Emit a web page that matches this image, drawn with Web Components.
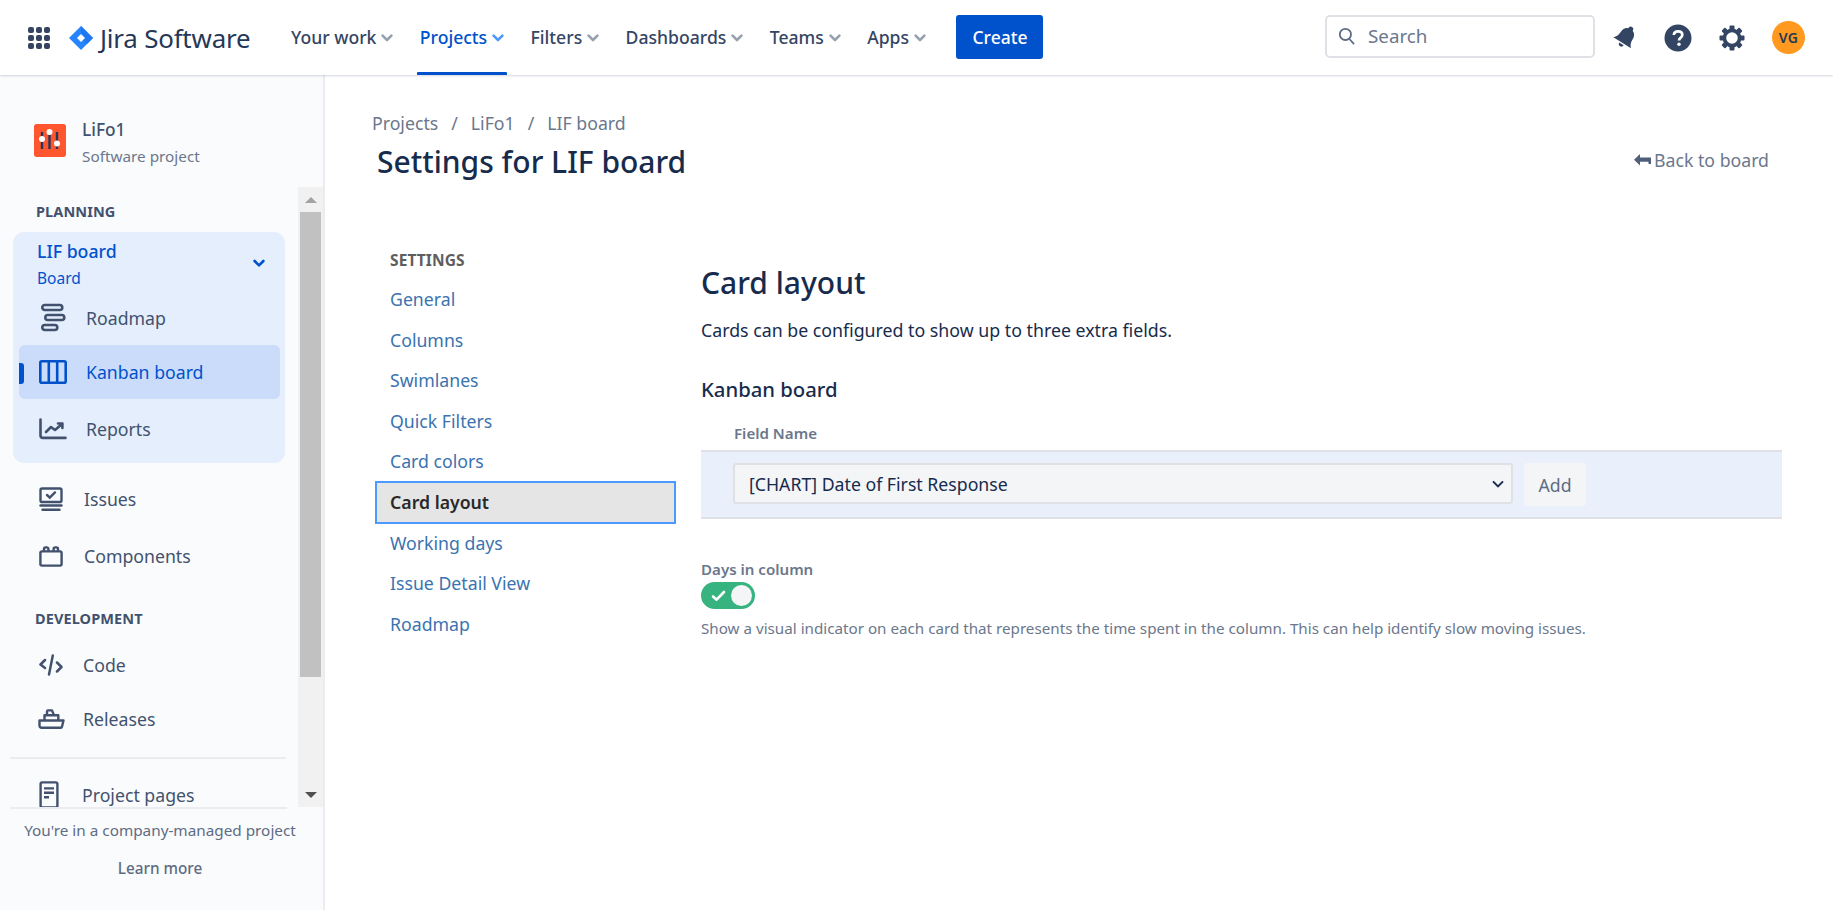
<!DOCTYPE html>
<html lang="en">
<head>
<meta charset="utf-8">
<title>Card layout</title>
<style>
  html, body { margin: 0; height: 100%; overflow: hidden; background: #fff; }
  body { font-family: "Noto Sans", "Open Sans", sans-serif; color: #172b4d; display: flex; flex-direction: column; height: 910px; }
</style>
</head>
<body>
<jira-topbar></jira-topbar>
<app-shell>
  <jira-sidebar slot="side"></jira-sidebar>
  <board-settings slot="main"></board-settings>
</app-shell>

<script>
const ICONS = {
  roadmap: '<svg width="26" height="30" viewBox="0 0 26 30" fill="none" stroke="currentColor" stroke-width="2.6"><rect x="2.3" y="2" width="20" height="5" rx="2.5"/><rect x="5.3" y="12" width="19" height="5" rx="2.5"/><rect x="2.3" y="22" width="15" height="5" rx="2.5"/></svg>',
  kanban: '<svg width="28" height="24" viewBox="0 0 28 24" fill="none" stroke="currentColor" stroke-width="2.6"><rect x="1.3" y="1.3" width="25.4" height="21.4" rx="1.5"/><path d="M9.8 1.3v21.4M18.2 1.3v21.4"/></svg>',
  reports: '<svg width="28" height="22" viewBox="0 0 28 22" fill="none" stroke="currentColor" stroke-width="2.6" stroke-linejoin="round" stroke-linecap="round"><path d="M1.5 1.5v16a2.4 2.4 0 0 0 2.4 2.4h22.6"/><path d="M7 14l5-5 4 3 7-6"/><path d="M19 5.5h4.4v4.4"/></svg>',
  issues: '<svg width="24" height="25" viewBox="0 0 24 25" fill="none" stroke="currentColor" stroke-width="2.4" stroke-linecap="round"><rect x="1.5" y="1.5" width="21" height="13.5" rx="1.6"/><path d="M8 8l2.8 2.6L16 5.4"/><path d="M1.5 18.5h21"/><path d="M3.5 22.8h17"/></svg>',
  components: '<svg width="24" height="21" viewBox="0 0 24 21" fill="none" stroke="currentColor" stroke-width="2.4" stroke-linejoin="round"><rect x="1.4" y="5.4" width="21.2" height="14.2" rx="1.6"/><path d="M5 5.4V3a1.6 1.6 0 0 1 1.6-1.6h1.2A1.6 1.6 0 0 1 9.4 3v2.4M14.6 5.4V3a1.6 1.6 0 0 1 1.6-1.6h1.2A1.6 1.6 0 0 1 19 3v2.4"/></svg>',
  code: '<svg width="24" height="22" viewBox="0 0 24 22" fill="none" stroke="currentColor" stroke-width="2.5" stroke-linecap="round" stroke-linejoin="round"><path d="M6 6l-4.5 4.5L6 14"/><path d="M18 8.5l4.5 4.5L18 17.5"/><path d="M13.8 1.6L10 20.4"/></svg>',
  releases: '<svg width="27" height="20" viewBox="0 0 27 20" fill="none" stroke="currentColor" stroke-width="2.4" stroke-linejoin="round"><path d="M1.5 11.5h24l-1.6 6.5a1 1 0 0 1-1 .7H3.5a2 2 0 0 1-2-2z"/><path d="M6.5 11.5V6.2h13.8v5.3"/><path d="M9 6.2V2.4a1 1 0 0 1 1-1h4l2 4.8"/></svg>',
  pages: '<svg width="20" height="28" viewBox="0 0 20 28" fill="none" stroke="currentColor" stroke-width="2.4"><rect x="1.6" y="1.4" width="16.8" height="25" rx="1.6"/><path d="M5 7.4h10M5 11.8h10M5 16.2h5"/></svg>'
};

class AppShell extends HTMLElement {
  constructor() {
    super();
    this.attachShadow({ mode: 'open' });
    this.shadowRoot.innerHTML = `
      <style>
        :host { display: flex; flex: 1; min-height: 0; }
        ::slotted([slot=side]) { flex: 0 0 325px; }
        ::slotted([slot=main]) { flex: 1; min-width: 0; }
      </style>
      <slot name="side"></slot>
      <slot name="main"></slot>
    `;
  }
}

class JiraTopbar extends HTMLElement {
  constructor() {
    super();
    this.attachShadow({ mode: 'open' });
    const items = [['Your work', 0], ['Projects', 1], ['Filters', 0], ['Dashboards', 0], ['Teams', 0], ['Apps', 0]];
    const chevron = '<svg width="12" height="8" viewBox="0 0 12 8" fill="none" stroke="currentColor" stroke-width="2.6" stroke-linecap="round" stroke-linejoin="round"><path d="M1.6 1.6L6 6l4.4-4.4"/></svg>';
    const dots = Array.from({ length: 9 }, () => '<i></i>').join('');
    const teeth = [0, 45, 90, 135, 180, 225, 270, 315].map(a => `<rect x="10.500" y="0.500" width="5" height="5" rx="1" transform="rotate(${a} 13 13)"/>`).join('');
    this.shadowRoot.innerHTML = `
      <style>
        :host {
          display: flex; align-items: center; height: 75px; flex: none; box-sizing: border-box;
          padding: 0 0 0 28px; background: #fff; position: relative; z-index: 2;
          box-shadow: 0 1px 2px rgba(9, 30, 66, .18);
        }
        .dots { display: grid; grid-template-columns: repeat(3, 6px); gap: 2px; width: 22px; height: 22px; margin-top: 1px; }
        .dots i { width: 6px; height: 6px; border-radius: 2px; background: #344563; }
        .logo { display: flex; align-items: center; margin-left: 19px; gap: 7px; width: 193px; font-size: 25.900px; color: #253858; letter-spacing: -.2px; }
        nav { display: flex; height: 100%; margin-left: 29px; }
        a { position: relative; display: flex; align-items: center; gap: 5px; margin-right: 26.400px; padding-bottom: 2px; font-size: 17.600px; font-weight: 500; color: #344563; height: 100%; box-sizing: border-box; }
        a svg { color: #97a0af; margin-top: 2px; }
        a.on { color: #0052cc; }
        a.on svg { color: #4c9aff; }
        a.on::after { content: ''; position: absolute; left: -3px; right: -3px; bottom: 0; height: 3px; background: #0052cc; border-radius: 1px 1px 0 0; }
        .create { display: flex; align-items: center; justify-content: center; margin: -1px 0 0 4px; width: 87px; height: 44px; background: #0052cc; color: #fff; font-size: 17.500px; font-weight: 500; border-radius: 3px; }
        .search { display: flex; align-items: center; gap: 13px; margin-left: auto; width: 270px; height: 43px; box-sizing: border-box; border: 2px solid #dfe1e6; border-radius: 5px; padding: 0 0 2px 11px; color: #6b778c; font-size: 18.800px; margin-top: -2px; }
        .act { display: flex; align-items: center; margin: 0 28px 0 17px; }
        .bell { margin-right: 25px; }
        .help { margin-right: 27px; }
        .gear { margin-right: 27px; }
        .avatar { display: flex; align-items: center; justify-content: center; width: 33px; height: 33px; border-radius: 50%; background: #ff991f; color: #253858; font-size: 14px; font-weight: 600; letter-spacing: .3px; }
      </style>
      <div class="dots">${dots}</div>
      <div class="logo">
        <svg width="24" height="24" viewBox="0 0 24 24"><path d="M12 0l12 12-12 12L0 12z" fill="#2684ff"/><path d="M12 0l12 12-6 6-6-6 0-6z" fill="#1f78f0"/><path d="M12 8l4 4-4 4-4-4z" fill="#fff"/></svg>
        <span>Jira Software</span>
      </div>
      <nav>${items.map(([t, on]) => `<a class="${on ? 'on' : ''}">${t}${chevron}</a>`).join('')}</nav>
      <div class="create">Create</div>
      <div class="search">
        <svg width="17" height="18" viewBox="0 0 17 18" fill="none" stroke="#5e6c84" stroke-width="1.800"><circle cx="7.400" cy="7.400" r="5.600"/><path d="M11.400 12l4.200 4.600" stroke-linecap="round"/></svg>
        <span>Search</span>
      </div>
      <div class="act">
        <svg class="bell" width="27" height="27" viewBox="0 0 26 26" fill="#344563"><g transform="rotate(32 13 13)"><circle cx="13" cy="3.500" r="2.400"/><path d="M13 3.500c-4.400 0-6.700 3-6.700 7.200 0 3.500-.9 6.200-3.300 8.300h20c-2.400-2.100-3.300-4.800-3.300-8.300 0-4.200-2.300-7.200-6.700-7.200z"/><path d="M10.400 20.300h5.200c-.2 1.700-1.200 2.700-2.600 2.700s-2.400-1-2.600-2.700z"/></g></svg>
        <svg class="help" width="28" height="28" viewBox="0 0 28 28"><circle cx="14" cy="14" r="13.500" fill="#344563"/><path d="M9.800 11c.2-2.400 1.900-3.700 4.300-3.700 2.500 0 4.200 1.400 4.200 3.500 0 3-3.300 3-3.300 5.700" fill="none" stroke="#fff" stroke-width="2.700"/><circle cx="15" cy="20.300" r="1.700" fill="#fff"/></svg>
        <svg class="gear" width="26" height="26" viewBox="0 0 26 26" fill="#344563"><circle cx="13" cy="13" r="7.600" fill="none" stroke="#344563" stroke-width="3.600"/>${teeth}</svg>
        <div class="avatar">VG</div>
      </div>
    `;
  }
}

class NavItem extends HTMLElement {
  constructor() {
    super();
    this.attachShadow({ mode: 'open' });
  }
  connectedCallback() {
    const icon = ICONS[this.getAttribute('icon')] || '';
    this.shadowRoot.innerHTML = `
      <style>
        :host { display: flex; align-items: center; height: var(--row, 54px); box-sizing: border-box; padding-left: var(--pad, 25px); color: #42526e; font-size: 17.700px; position: relative; border-radius: 6px; }
        :host([active]) { background: #cadcf9; color: #0052cc; }
        :host([active])::before { content: ''; position: absolute; left: 0; top: 18px; width: 5px; height: 21px; background: #0052cc; border-radius: 0 3px 3px 0; }
        .i { display: flex; align-items: center; justify-content: center; width: 30px; margin-right: var(--gap, 15px); }
      </style>
      <span class="i">${icon}</span><slot></slot>
    `;
  }
}

class JiraSidebar extends HTMLElement {
  constructor() {
    super();
    this.attachShadow({ mode: 'open' });
    this.shadowRoot.innerHTML = `
      <style>
        :host { display: flex; flex-direction: column; box-sizing: border-box; background: #fafbfc; border-right: 2px solid #ebecf0; height: 100%; }
        .project { display: flex; align-items: center; gap: 16px; height: 112px; flex: none; box-sizing: border-box; padding: 18px 0 0 34px; }
        .project b { display: block; font-weight: 500; font-size: 17.300px; color: #42526e; }
        .project small { display: block; font-size: 15.300px; color: #6b778c; margin-top: 5px; }
        .project .txt { padding-top: 4px; }
        .mark { width: 32px; height: 33px; border-radius: 2px; display: block; }
        .scroll { display: flex; height: 620px; flex: none; }
        .list { flex: 1; min-width: 0; overflow: hidden; }
        h4 { margin: 0; font-size: 14.500px; font-weight: 700; color: #42526e; letter-spacing: .1px; }
        .plan { padding: 14px 0 11px 36px; line-height: 20px; }
        .dev { padding: 0 0 0 35px; line-height: 20px; margin-top: 24px; }
        .group { margin: 0 0 0 13px; width: 272px; height: 231px; box-sizing: border-box; background: #e4eefc; border-radius: 11px; padding-top: 7px; }
        .head { display: flex; align-items: center; justify-content: space-between; padding: 0 20px 0 24px; color: #0052cc; }
        .head b { display: block; font-weight: 500; font-size: 17.700px; line-height: 24px; }
        .head small { display: block; font-size: 15.500px; line-height: 20px; margin-top: 5px; }
        .rows { padding: 0 5px 0 6px; margin-top: 3px; }
        .divider { height: 2px; background: #ebecf0; margin: 13px 12px 0 10px; }
        .bar { width: 25px; flex: none; background: #f1f1f1; display: flex; flex-direction: column; align-items: center; }
        .thumb { width: 21px; height: 465px; background: #c1c1c1; }
        .up, .down { flex: none; display: flex; justify-content: center; }
        .up { height: 25px; align-items: center; }
        .up::before { content: ''; border: 6px solid transparent; border-top: 0; border-bottom: 6px solid #a3a3a3; }
        .down { margin-top: auto; height: 36px; }
        .down::before { content: ''; border: 6px solid transparent; border-bottom: 0; border-top: 6px solid #505050; margin-top: 21px; }
        .foot { flex: none; margin: 0 13px 0 10px; text-align: center; font-size: 15.300px; color: #5e6c84; }
        .foot hr { margin: 0 0 10px; border: 0; height: 2px; width: 277px; background: #ebecf0; }
        .foot div { line-height: 22px; }
        .foot .more { margin-top: 16px; font-weight: 500; }
        .clip { height: 50px; overflow: hidden; }
      </style>
      <div class="project">
        <svg class="mark" viewBox="0 0 32 33">
          <rect width="32" height="33" rx="2" fill="#ff5630"/>
          <path d="M8 8v17M15.500 6v19M23 8v17" stroke="#253858" stroke-width="2.400"/>
          <circle cx="8" cy="15" r="3" fill="#fff"/><circle cx="15.500" cy="8" r="3" fill="#fff"/><circle cx="23" cy="19.500" r="3" fill="#fff"/>
        </svg>
        <div class="txt"><b>LiFo1</b><small>Software project</small></div>
      </div>
      <div class="scroll">
        <div class="list">
          <h4 class="plan">PLANNING</h4>
          <div class="group">
            <div class="head">
              <div><b>LIF board</b><small>Board</small></div>
              <svg width="12" height="9" viewBox="0 0 12 9" fill="none" stroke="#0052cc" stroke-width="2.600" stroke-linecap="round" stroke-linejoin="round"><path d="M1.600 2L6 6.400 10.400 2"/></svg>
            </div>
            <div class="rows">
              <nav-item icon="roadmap" style="--row:54px;--pad:19px;--gap:18px">Roadmap</nav-item>
              <nav-item icon="kanban" active style="--pad:19px;--gap:18px">Kanban board</nav-item>
              <nav-item icon="reports" style="--pad:19px;--gap:18px;--row:58px;margin-top:1px">Reports</nav-item>
            </div>
          </div>
          <nav-item icon="issues" style="margin-top:7px;--row:58px;--pad:36px;--gap:18px">Issues</nav-item>
          <nav-item icon="components" style="--row:56px;--pad:36px;--gap:18px">Components</nav-item>
          <h4 class="dev">DEVELOPMENT</h4>
          <nav-item icon="code" style="margin-top:7px;--row:59px;--pad:36px;--gap:17px">Code</nav-item>
          <nav-item icon="releases" style="--row:50px;--pad:36px;--gap:17px">Releases</nav-item>
          <div class="divider"></div>
          <div class="clip"><nav-item icon="pages" style="--row:72px;--gap:18px;--pad:34px">Project pages</nav-item></div>
        </div>
        <div class="bar"><div class="up"></div><div class="thumb"></div><div class="down"></div></div>
      </div>
      <div class="foot">
        <hr>
        <div>You're in a company-managed project</div>
        <div class="more">Learn more</div>
      </div>
    `;
  }
}

class BoardSettings extends HTMLElement {
  constructor() {
    super();
    this.attachShadow({ mode: 'open' });
    const links = ['General', 'Columns', 'Swimlanes', 'Quick Filters', 'Card colors', 'Card layout', 'Working days', 'Issue Detail View', 'Roadmap'];
    this.shadowRoot.innerHTML = `
      <style>
        :host { display: block; box-sizing: border-box; padding: 34px 51px 0 47px; background: #fff; height: 100%; }
        .crumbs { display: flex; gap: 13px; font-size: 17.700px; color: #6b778c; line-height: 28px; }
        .title { display: flex; align-items: center; justify-content: space-between; padding: 5px 13px 0 5px; }
        h1 { margin: 0; font-size: 30px; line-height: 40px; font-weight: 500; color: #172b4d; }
        .back { display: flex; align-items: center; gap: 3px; font-size: 17.700px; color: #6b778c; margin-top: -5px; }
        .cols { display: flex; margin-top: 60px; }
        ul { list-style: none; margin: 0; padding: 0; width: 301px; flex: none; margin-left: 3px; }
        li.h { font-size: 15.500px; font-weight: 700; color: #5e5e5e; padding-left: 15px; height: 37px; line-height: 37px; letter-spacing: .1px; }
        li { display: flex; align-items: center; height: 40.500px; box-sizing: border-box; padding-left: 15px; font-size: 17.700px; color: #3b73af; }
        li.on { background: #e5e5e5; border: 2px solid #4c9aff; padding-left: 13px; font-weight: 600; color: #292929; height: 43px; margin: -1px 0; }
        .body { flex: 1; margin-left: 25px; padding-top: 21px; }
        h2 { margin: 0; font-size: 30px; line-height: 40px; font-weight: 500; color: #172b4d; }
        p { margin: 0; }
        .desc { font-size: 17.750px; line-height: 24px; color: #172b4d; margin-top: 15px; }
        h3 { margin: 33px 0 0; font-size: 20.300px; line-height: 28px; font-weight: 500; color: #172b4d; }
        .fname { font-size: 15.100px; font-weight: 600; color: #6b778c; padding-left: 33px; margin-top: 20px; line-height: 20px; }
        .row { display: flex; align-items: flex-start; gap: 11px; box-sizing: border-box; height: 69px; padding: 11px 0 0 32px; margin-top: 7px; background: #e9f0fb; border-top: 2px solid #dfe1e6; border-bottom: 2px solid #dfe1e6; }
        .sel { display: flex; align-items: center; justify-content: space-between; width: 780px; height: 41px; box-sizing: border-box; background: #f4f5f7; border: 2px solid #dfe1e6; border-radius: 3px; padding: 0 7px 0 14px; font-size: 17.700px; color: #172b4d; }
        .add { display: flex; align-items: center; justify-content: center; width: 62px; height: 43px; background: #f4f5f7; border-radius: 3px; font-size: 17.700px; color: #5e6c84; }
        .days { font-size: 15.100px; font-weight: 600; color: #6b778c; margin-top: 40px; line-height: 20px; }
        .toggle { display: flex; align-items: center; justify-content: space-between; width: 54px; height: 27px; box-sizing: border-box; background: #36b37e; border-radius: 14px; padding: 0 3px 0 10px; margin-top: 3px; }
        .toggle i { width: 21px; height: 21px; border-radius: 50%; background: #f4f5f7; }
        .hint { font-size: 15.200px; color: #6b778c; margin-top: 9px; line-height: 20px; }
      </style>
      <div class="crumbs"><span>Projects</span><span>/</span><span>LiFo1</span><span>/</span><span>LIF board</span></div>
      <div class="title">
        <h1>Settings for LIF board</h1>
        <div class="back">
          <svg width="17" height="12" viewBox="0 0 17 12" fill="#505f79"><path d="M6 0v3.500h11V10h-2.500V7.800H6V11.500L0 5.800z"/></svg>
          <span>Back to board</span>
        </div>
      </div>
      <div class="cols">
        <ul>
          <li class="h">SETTINGS</li>
          ${links.map(l => `<li class="${l === 'Card layout' ? 'on' : ''}">${l}</li>`).join('')}
        </ul>
        <div class="body">
          <h2>Card layout</h2>
          <p class="desc">Cards can be configured to show up to three extra fields.</p>
          <h3>Kanban board</h3>
          <div class="fname">Field Name</div>
          <div class="row">
            <div class="sel"><span>[CHART] Date of First Response</span>
              <svg width="12" height="8" viewBox="0 0 12 8" fill="none" stroke="#172b4d" stroke-width="2"><path d="M1 1.400l5 5 5-5"/></svg>
            </div>
            <div class="add">Add</div>
          </div>
          <div class="days">Days in column</div>
          <div class="toggle">
            <svg width="15" height="12" viewBox="0 0 15 12" fill="none" stroke="#fff" stroke-width="2.600" stroke-linecap="round" stroke-linejoin="round"><path d="M2 6.500l3.600 3.200L13 2"/></svg>
            <i></i>
          </div>
          <p class="hint">Show a visual indicator on each card that represents the time spent in the column. This can help identify slow moving issues.</p>
        </div>
      </div>
    `;
  }
}

customElements.define('app-shell', AppShell);
customElements.define('jira-topbar', JiraTopbar);
customElements.define('nav-item', NavItem);
customElements.define('jira-sidebar', JiraSidebar);
customElements.define('board-settings', BoardSettings);
</script>
</body>
</html>
